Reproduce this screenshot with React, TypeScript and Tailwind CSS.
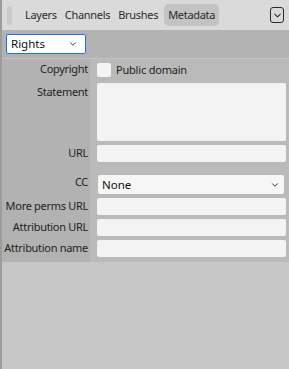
import { ChevronDown } from 'lucide-react';

const font = { fontFamily: '"Noto Sans", "Open Sans", sans-serif' };

function Field({ label, children, className = '' }: { label: string; children: React.ReactNode; className?: string }) {
  return (
    <div className={`flex items-center ${className}`}>
      <div className="w-[88px] shrink-0 text-right pr-[2px] text-[11px] tracking-[-0.3px] whitespace-nowrap text-[#1e1e1e]">{label}</div>
      <div className="flex-1 pl-[7px] pr-[3px]">{children}</div>
    </div>
  );
}

function TextBox() {
  return <div className="h-[17px] rounded-[2px] bg-[#f3f3f3]" />;
}

export default function App() {
  return (
    <div className="w-[289px] h-[369px] flex flex-col border-l-2 border-[#9c9c9c] bg-[#c7c7c7] select-none" style={font}>
      {/* Tab bar */}
      <div className="h-[30px] flex items-center bg-[#dadada] pl-[5px] pr-[4px]">
        <div className="w-[5px] h-[19px] rounded-[3px] bg-[#cbcbcb]" />
        <div className="flex items-center ml-[11px] gap-[4px] text-[11px] tracking-[-0.3px] text-[#2a2a2a]">
          <span className="px-[2px] py-[3px]">Layers</span>
          <span className="px-[2px] py-[3px]">Channels</span>
          <span className="px-[2px] py-[3px]">Brushes</span>
          <span className="px-[4px] py-[3px] rounded-[5px] bg-[#c3c3c3]">Metadata</span>
        </div>
        <div className="ml-auto mr-[1px] w-[14px] h-[16px] rounded-[3px] border border-[#2a2a2a] flex items-center justify-center">
          <ChevronDown className="w-[11px] h-[11px] text-[#2a2a2a]" strokeWidth={2.2} />
        </div>
      </div>

      {/* Toolbar */}
      <div className="h-[29px] flex items-center bg-[#b3b3b3] pl-[4px] border-b border-[#c4c4c4]">
        <div className="w-[80px] h-[20px] flex items-center justify-between bg-white border border-[#1a73e8] rounded-[2px] pl-[4px] pr-[7px] text-[11.5px] text-[#111]">
          <span>Rights</span>
          <ChevronDown className="w-[10px] h-[10px] text-[#333]" strokeWidth={2.2} />
        </div>
      </div>

      {/* Form */}
      <div className="flex flex-col pt-[3px] pb-[5px] bg-[linear-gradient(to_right,#b2b2b2_88px,#bababa_88px)]">
        <Field label="Copyright" className="h-[15px] items-end">
          <div className="flex items-center gap-[5px] text-[11px] tracking-[-0.2px] text-[#1e1e1e]">
            <div className="w-[14px] h-[14px] rounded-[2px] bg-[#f3f3f3]" />
            <span className="leading-[14px]">Public domain</span>
          </div>
        </Field>
        <div className="flex mt-[6px]">
          <div className="w-[88px] shrink-0 text-right pr-[2px] text-[11px] tracking-[-0.3px] text-[#1e1e1e] leading-[14px] pt-[2px]">Statement</div>
          <div className="flex-1 pl-[7px] pr-[3px]">
            <div className="h-[58px] rounded-[2px] bg-[#f3f3f3]" />
          </div>
        </div>
        <Field label="URL" className="mt-[4px]">
          <TextBox />
        </Field>
        <Field label="CC" className="mt-[12px] items-start">
          <div className="ml-[1px] mr-[2px] h-[19px] mt-[1px] flex items-center justify-between rounded-[2px] bg-[#f6f6f6] pl-[4px] pr-[4px] text-[11.5px] text-[#111]">
            <span>None</span>
            <ChevronDown className="w-[10px] h-[10px] text-[#333]" strokeWidth={2.4} />
          </div>
        </Field>
        <Field label="More perms URL" className="mt-[4px]">
          <TextBox />
        </Field>
        <Field label="Attribution URL" className="mt-[4px]">
          <TextBox />
        </Field>
        <Field label="Attribution name" className="mt-[4px]">
          <TextBox />
        </Field>
      </div>
      <div className="flex-1" />
    </div>
  );
}
